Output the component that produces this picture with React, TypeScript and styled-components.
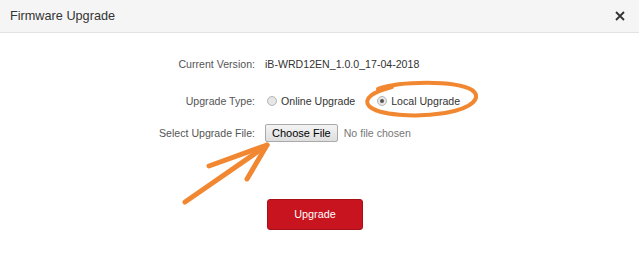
import React from 'react'
import styled, { createGlobalStyle } from 'styled-components'

const GlobalStyle = createGlobalStyle`
  html, body {
    margin: 0;
    padding: 0;
    background: #fff;
  }
  body {
    font-family: "Liberation Sans", Arial, sans-serif;
  }
`

const Dialog = styled.div`
  position: relative;
  width: 639px;
  height: 262px;
  background: #fff;
  overflow: hidden;
`

const Header = styled.div`
  height: 32px;
  display: flex;
  align-items: center;
  justify-content: space-between;
  padding: 0 13px 0 10px;
  background: #f5f5f5;
  border-bottom: 1px solid #e3e3e3;
`

const Title = styled.h4`
  margin: 0;
  font-size: 12.7px;
  font-weight: normal;
  color: #333;
`

const CloseButton = styled.button`
  border: none;
  background: transparent;
  padding: 0;
  width: 12px;
  height: 12px;
  display: flex;
  cursor: pointer;
`

const Form = styled.div`
  display: flex;
  flex-direction: column;
  padding-top: 21px;
`

const Row = styled.div<{ $gap: number }>`
  display: flex;
  align-items: center;
  height: 20px;
  margin-top: ${p => p.$gap}px;
  font-size: 10.6px;
`

const Label = styled.label`
  width: 265px;
  text-align: right;
  color: #555;
  padding-right: 10px;
  box-sizing: border-box;
`

const Value = styled.div`
  display: flex;
  align-items: center;
  color: #333;
`

const RadioOption = styled.span`
  display: inline-flex;
  align-items: center;
  margin-right: 20px;
  color: #333;
`

const RadioDot = styled.span<{ $checked?: boolean }>`
  position: relative;
  width: 8px;
  height: 8px;
  border-radius: 50%;
  border: 1px solid #b5b5b5;
  background: #e6e6e6;
  margin: 0 4px 0 2px;
  box-sizing: content-box;

  &::after {
    content: '';
    display: ${p => (p.$checked ? 'block' : 'none')};
    position: absolute;
    left: 2px;
    top: 2px;
    width: 4px;
    height: 4px;
    border-radius: 50%;
    background: #555;
  }
`

const FileButton = styled.button`
  height: 18px;
  padding: 0 6px;
  margin: 0 6px 0 0;
  font-family: inherit;
  font-size: 11px;
  color: #000;
  background: linear-gradient(#f4f4f4, #dedede);
  border: 1px solid #a9a9a9;
  border-radius: 2px;
`

const FileHint = styled.span`
  color: #777;
`

const SubmitButton = styled.button`
  width: 96px;
  height: 31px;
  margin-left: 2px;
  font-family: inherit;
  font-size: 10.8px;
  color: #fff;
  background: #c8141e;
  border: 1px solid #a81018;
  border-radius: 3px;
`

const Annotations = styled.svg`
  position: absolute;
  left: 0;
  top: 0;
  pointer-events: none;
`

const ORANGE = '#f28732'

const App = () => {
  return (
    <Dialog>
      <GlobalStyle />
      <Header>
        <Title>Firmware Upgrade</Title>
        <CloseButton aria-label="close">
          <svg width="12" height="12" viewBox="0 0 12 12">
            <path d="M2 2 L10 10 M10 2 L2 10" stroke="#333" strokeWidth="1.8" />
          </svg>
        </CloseButton>
      </Header>
      <Form>
        <Row $gap={0}>
          <Label>Current Version:</Label>
          <Value>iB-WRD12EN_1.0.0_17-04-2018</Value>
        </Row>
        <Row $gap={17}>
          <Label>Upgrade Type:</Label>
          <Value>
            <RadioOption>
              <RadioDot />
              Online Upgrade
            </RadioOption>
            <RadioOption>
              <RadioDot $checked />
              Local Upgrade
            </RadioOption>
          </Value>
        </Row>
        <Row $gap={12}>
          <Label>Select Upgrade File:</Label>
          <Value>
            <FileButton>Choose File</FileButton>
            <FileHint>No file chosen</FileHint>
          </Value>
        </Row>
        <Row $gap={61}>
          <Label />
          <SubmitButton>Upgrade</SubmitButton>
        </Row>
      </Form>
      <Annotations width="639" height="262" viewBox="0 0 639 262">
        <path
          d="M378 89 C 400 81, 455 80, 472 90 C 482 97, 474 108, 445 113 C 415 118, 378 115, 369 106 C 363 99, 372 92, 392 87"
          fill="none"
          stroke={ORANGE}
          strokeWidth="4"
          strokeLinecap="round"
        />
        <g stroke={ORANGE} strokeWidth="5" strokeLinecap="round" fill="none">
          <path d="M185 202 L266 146" />
          <path d="M267 145 L209 166" />
          <path d="M267 145 L247 179" />
        </g>
      </Annotations>
    </Dialog>
  )
}

export default App
